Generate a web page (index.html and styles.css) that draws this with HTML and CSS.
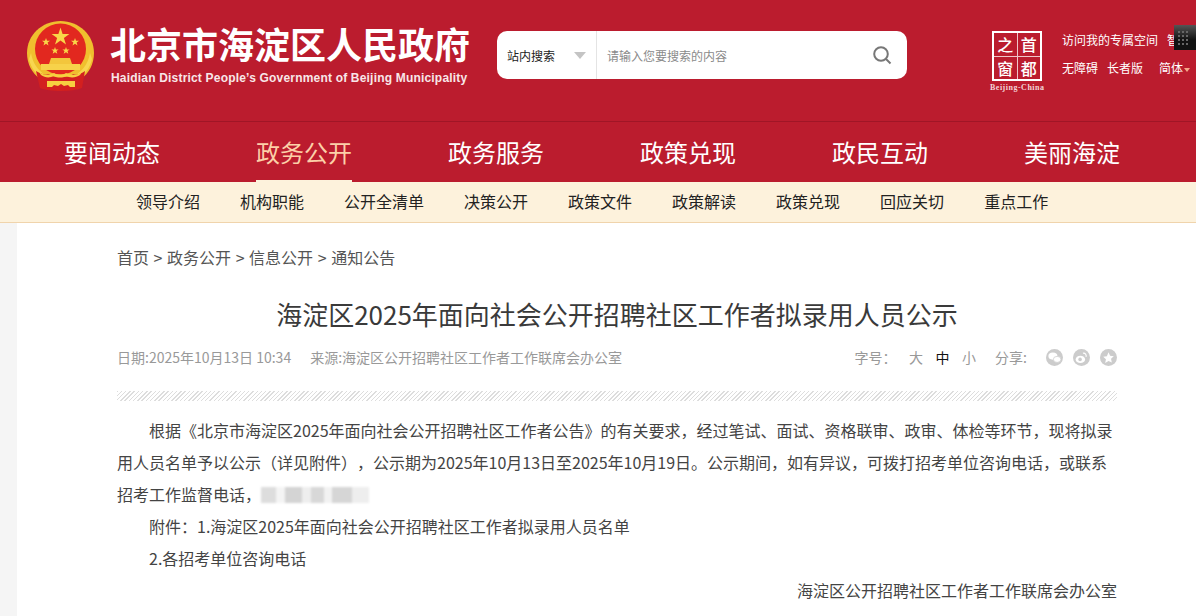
FILE: index.html
```html
<!DOCTYPE html>
<html lang="zh">
<head>
    <meta charset="UTF-8">
    <meta name="viewport" content="width=device-width, initial-scale=1.0">
    <title>海淀区2025年面向社会公开招聘社区工作者拟录用人员公示</title>
    <link rel="stylesheet" href="styles.css">
</head>
<body>

    <header class="header">
        <div class="logo">
            <svg class="emblem" width="67" height="70" viewBox="0 0 67 70">
                <path d="M33.500 0C15 0 0 14 0 32c0 11 5 20 13 26h41c8-6 13-15 13-26C67 14 52 0 33.500 0z" fill="#f0bf2e"/>
                <path d="M2 38c2 9 7 15 13 20l3-4C11 49 6 43 4 32zM65 38c-2 9-7 15-13 20l-3-4c7-5 12-11 14-22z" fill="#f8d650"/>
                <circle cx="33.500" cy="28" r="25.500" fill="#e2281f"/>
                <path d="M33.500 6.500l2.100 6.500h6.800l-5.500 4 2.100 6.500-5.500-4-5.500 4 2.100-6.500-5.500-4h6.800z" fill="#f9d648"/>
                <path d="M19 17l1 2.800h3l-2.400 1.800.9 2.900-2.500-1.700-2.500 1.700.9-2.900-2.400-1.800h3zM48 17l1 2.800h3l-2.400 1.800.9 2.900-2.500-1.700-2.500 1.700.9-2.900-2.400-1.800h3zM28 26l.9 2.500h2.700l-2.100 1.600.8 2.600-2.300-1.500-2.300 1.500.8-2.600-2.100-1.600h2.700zM39 26l.9 2.500h2.700l-2.100 1.600.8 2.600-2.300-1.500-2.300 1.500.8-2.600-2.100-1.600h2.700z" fill="#f9d648"/>
                <path d="M24 37h19l2 6H22z" fill="#f3c63c"/>
                <path d="M14 43h39v6H14z" fill="#f7d24a"/>
                <path d="M9 50c5 3 9 4 13 3 4 3 8 4 12 2 4 2 8 1 12-2 4 1 8 0 12-3l-3 17c-5 2-12 3-21 3s-17-1-21-3z" fill="#d3201f"/>
                <path d="M12 51c6 4 11 3 15 1 3 2 9 2 12 0 4 2 10 3 16-1l-2 3c-4 3-10 3-14 1-3 2-9 2-12 0-4 2-9 2-13-1z" fill="#f7cf40"/>
                <path d="M20 60h28v6h-5l-2-2-4 1-3-2-3 2-4-1-2 2h-5z" fill="#f7cf40"/>
            </svg>
            <div class="logo-text">
                <h1>北京市海淀区人民政府</h1>
                <p>Haidian District People’s Government of Beijing Municipality</p>
            </div>
        </div>

        <div class="search">
            <div class="search-type">
                <span>站内搜索</span>
                <i class="caret"></i>
            </div>
            <div class="search-input">
                <span>请输入您要搜索的内容</span>
                <svg width="20" height="20" viewBox="0 0 20 20" fill="none" stroke="#777" stroke-width="2">
                    <circle cx="9" cy="9" r="6.800"/>
                    <path d="M14 14l4.500 4.500"/>
                </svg>
            </div>
        </div>

        <div class="seal">
            <div class="seal-box">
                <span>之</span><span>首</span><span>窗</span><span>都</span>
            </div>
            <div class="seal-en">Beijing-China</div>
        </div>

        <div class="top-links">
            <div class="top-row"><span>访问我的专属空间</span><span>智能</span></div>
            <div class="top-row"><span>无障碍</span><span>长者版</span><span class="lang">简体<i class="lang-caret"></i></span></div>
        </div>
        <div class="qr-chip"></div>
    </header>

    <nav class="nav">
        <a href="#">要闻动态</a>
        <a href="#" class="active">政务公开</a>
        <a href="#">政务服务</a>
        <a href="#">政策兑现</a>
        <a href="#">政民互动</a>
        <a href="#">美丽海淀</a>
    </nav>

    <nav class="subnav">
        <a href="#">领导介绍</a>
        <a href="#">机构职能</a>
        <a href="#">公开全清单</a>
        <a href="#">决策公开</a>
        <a href="#">政策文件</a>
        <a href="#">政策解读</a>
        <a href="#">政策兑现</a>
        <a href="#">回应关切</a>
        <a href="#">重点工作</a>
    </nav>

    <main class="page">
        <div class="article">
            <div class="crumbs">首页 &gt; 政务公开 &gt; 信息公开 &gt; 通知公告</div>
            <h2 class="title">海淀区2025年面向社会公开招聘社区工作者拟录用人员公示</h2>

            <div class="meta">
                <div class="meta-left">
                    <span>日期:2025年10月13日 10:34</span>
                    <span>来源:海淀区公开招聘社区工作者工作联席会办公室</span>
                </div>
                <div class="meta-right">
                    <span class="size-label">字号：</span>
                    <span class="size">大</span>
                    <span class="size current">中</span>
                    <span class="size">小</span>
                    <span class="share-label">分享:</span>
                    <span class="share">
                        <svg width="17" height="17" viewBox="0 0 18 18">
                            <circle cx="9" cy="9" r="9" fill="#ccc"/>
                            <ellipse cx="7.300" cy="7.500" rx="4.800" ry="3.800" fill="#fff"/>
                            <ellipse cx="11.800" cy="11" rx="4" ry="3.200" fill="#fff" stroke="#ccc" stroke-width=".8"/>
                        </svg>
                        <svg width="17" height="17" viewBox="0 0 18 18">
                            <circle cx="9" cy="9" r="9" fill="#ccc"/>
                            <ellipse cx="7.800" cy="11" rx="5" ry="3.800" fill="#fff"/>
                            <circle cx="7.500" cy="11" r="1.900" fill="#ccc"/>
                            <path d="M10.500 4.500c2.500-.5 4 1.500 3.300 3.800" fill="none" stroke="#fff" stroke-width="1.200"/>
                        </svg>
                        <svg width="17" height="17" viewBox="0 0 18 18">
                            <circle cx="9" cy="9" r="9" fill="#ccc"/>
                            <path d="M9 3.500l1.700 3.600 3.900.5-2.900 2.700.8 3.900L9 12.800l-3.500 1.900.8-3.900-2.900-2.700 3.900-.5z" fill="#fff"/>
                        </svg>
                    </span>
                </div>
            </div>

            <div class="hatch"></div>

            <div class="content">
                <p>根据《北京市海淀区2025年面向社会公开招聘社区工作者公告》的有关要求，经过笔试、面试、资格联审、政审、体检等环节，现将拟录用人员名单予以公示（详见附件），公示期为2025年10月13日至2025年10月19日。公示期间，如有异议，可拨打招考单位咨询电话，或联系招考工作监督电话，<i class="blur"></i></p>
                <p>附件：1.海淀区2025年面向社会公开招聘社区工作者拟录用人员名单</p>
                <p>2.各招考单位咨询电话</p>
                <p class="sign">海淀区公开招聘社区工作者工作联席会办公室</p>
            </div>
        </div>
    </main>

</body>
</html>
```

FILE: styles.css
```css
* {
    margin: 0;
    padding: 0;
    box-sizing: border-box;
}

body {
    font-family: "Noto Sans CJK SC", "Liberation Sans", sans-serif;
    background: #fff;
    color: #333;
    overflow: hidden;
    text-spacing-trim: space-all;
}

a {
    text-decoration: none;
}

.header {
    position: relative;
    height: 122px;
    background: #bb1c2e;
    border-bottom: 1px solid #a01526;
    display: flex;
    overflow: hidden;
}

.logo {
    width: 497px;
    flex: none;
    padding: 21px 0 0 27px;
    display: flex;
    gap: 16px;
}

.emblem {
    flex: none;
}

.logo-text {
    margin-top: -1px;
}

.logo-text h1 {
    font-size: 36px;
    line-height: 46px;
    font-weight: 700;
    color: #fff;
}

.logo-text p {
    font-family: "Liberation Sans", sans-serif;
    font-size: 12px;
    font-weight: 700;
    line-height: 22px;
    letter-spacing: .19px;
    color: #f8e6e8;
    margin: 1px 0 0 1px;
    white-space: nowrap;
}

.search {
    width: 410px;
    height: 48px;
    margin-top: 31px;
    background: #fff;
    border-radius: 10px;
    display: flex;
    flex: none;
}

.search-type {
    width: 100px;
    border-right: 1px solid #e4e4e4;
    padding-left: 10px;
    display: flex;
    align-items: center;
    justify-content: space-between;
    padding-right: 10px;
    font-size: 12px;
    color: #222;
}

.caret {
    border-left: 6px solid transparent;
    border-right: 6px solid transparent;
    border-top: 7px solid #c4c4c4;
}

.search-input {
    flex: 1;
    display: flex;
    align-items: center;
    justify-content: space-between;
    padding: 0 15px 0 10px;
    font-size: 12px;
    color: #8a8a8a;
}

.seal {
    width: 54px;
    margin: 31px 0 0 83px;
    flex: none;
}

.seal-box {
    width: 50px;
    height: 50px;
    margin-left: 2px;
    border: 2px solid #fff;
    display: grid;
    grid-template-columns: 1fr 1fr;
    grid-template-rows: 1fr 1fr;
    gap: 1px;
    background: #f0c4c8;
}

.seal-box span {
    background: #bb1c2e;
    color: #fff;
    font-size: 16px;
    font-weight: 500;
    line-height: 22px;
    text-align: center;
}

.seal-en {
    font-family: "Liberation Serif", serif;
    font-size: 8px;
    font-weight: 700;
    letter-spacing: .5px;
    color: #f3d3d6;
    line-height: 11px;
    margin-top: 1px;
    white-space: nowrap;
}

.top-links {
    margin: 26px 0 0 18px;
    font-size: 12px;
    color: #fff;
    white-space: nowrap;
}

.top-row {
    display: flex;
    gap: 9px;
    line-height: 28px;
}

.lang {
    margin-left: 7px;
}

.lang-caret {
    display: inline-block;
    margin-left: 1px;
    border-left: 3px solid transparent;
    border-right: 3px solid transparent;
    border-top: 4px solid #f5a98a;
    vertical-align: 1px;
}

/* 右上角的黑色小块 */
.qr-chip {
    position: absolute;
    top: 25px;
    left: 1174px;
    width: 22px;
    height: 25px;
    background: linear-gradient(#555, #111 60%);
}

.qr-chip::before {
    content: "";
    display: block;
    width: 12px;
    height: 16px;
    margin: 5px 0 0 3px;
    background: radial-gradient(circle, #666 0 1px, transparent 1px) 0 0 / 4px 4px;
}

.nav {
    height: 60px;
    background: #bb1c2e;
    padding-left: 16px;
    display: flex;
}

.nav a {
    width: 192px;
    padding: 0 48px;
    color: #fff;
    font-size: 24px;
    line-height: 60px;
    white-space: nowrap;
}

.nav a.active {
    color: #fcd0a8;
    position: relative;
}

.nav a.active::after {
    content: "";
    position: absolute;
    left: 48px;
    right: 48px;
    bottom: 0;
    height: 2px;
    background: #fdf2dc;
}

.subnav {
    height: 41px;
    background: #fdf2dc;
    border-bottom: 1px solid #f0d4ac;
    padding-left: 136px;
    display: flex;
    gap: 40px;
}

.subnav a {
    color: #222;
    font-size: 16px;
    line-height: 38px;
}

.page {
    margin-left: 17px;
    box-shadow: -17px 0 0 #f5f5f5;
    height: 394px;
}

.article {
    width: 1000px;
    margin-left: 100px;
    padding-top: 21px;
}

.crumbs {
    font-size: 16px;
    line-height: 26px;
    color: #555;
    word-spacing: 1px;
}

.title {
    font-size: 26px;
    font-weight: 400;
    line-height: 38px;
    text-align: center;
    color: #3a3a3a;
    margin-top: 25px;
}

.meta {
    display: flex;
    justify-content: space-between;
    align-items: center;
    margin-top: 14px;
    font-size: 14px;
    line-height: 20px;
    color: #999;
}

.meta-left {
    display: flex;
    gap: 19px;
}

.meta-right {
    display: flex;
    align-items: center;
}

.size {
    margin-left: 12.500px;
}

.size.current {
    color: #111;
}

.share-label {
    margin-left: 19px;
}

.share {
    display: flex;
    gap: 10px;
    margin-left: 19px;
}

.hatch {
    height: 10px;
    margin-top: 24px;
    background: repeating-linear-gradient(135deg, #ddd 0, #ddd 1px, #fff 1px, #fff 3px);
}

.content {
    margin-top: 13px;
    font-size: 16px;
    line-height: 32px;
    color: #444;
}

.content p {
    text-indent: 32px;
}

.content p.sign {
    text-align: right;
}

/* 打码的电话号码 */
.blur {
    display: inline-block;
    width: 108px;
    height: 16px;
    vertical-align: -2px;
    filter: blur(1px);
    background:
        linear-gradient(90deg, #ddd 0 14%, #f4f4f4 14% 22%, #d4d4d4 22% 38%, #eee 38% 46%, #d8d8d8 46% 58%, #f2f2f2 58% 66%, #d6d6d6 66% 84%, #eee 84% 100%);
}
```
